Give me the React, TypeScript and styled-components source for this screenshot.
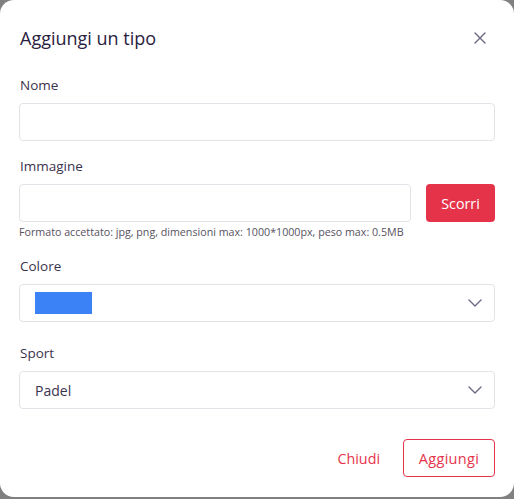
import React from "react";
import styled, { createGlobalStyle } from "styled-components";

const Global = createGlobalStyle`
  html, body { margin: 0; padding: 0; background: #808080; }
  body { font-family: "Open Sans", "Noto Sans", sans-serif; }
  * { box-sizing: border-box; }
`;

const Modal = styled.div`
  width: 514px;
  height: 497px;
  background: #ffffff;
  border-radius: 14px;
  padding: 24px 19px 20px 19px;
  display: flex;
  flex-direction: column;
`;

const Header = styled.div`
  display: flex;
  align-items: center;
  justify-content: space-between;
  height: 28px;
  margin-bottom: 23px;
  padding-left: 1px;
`;

const Title = styled.h2`
  margin: 0;
  font-size: 18px;
  font-weight: 400;
  color: #2a2140;
  line-height: 28px;
`;

const CloseButton = styled.button`
  border: none;
  background: none;
  padding: 0;
  width: 16px;
  height: 16px;
  margin-right: 7px;
  display: flex;
  align-items: center;
  justify-content: center;
  color: #6c6884;
  cursor: pointer;
`;

const Field = styled.div<{ $mb: number }>`
  display: flex;
  flex-direction: column;
  margin-bottom: ${(p) => p.$mb}px;
`;

const Label = styled.label`
  font-size: 13.5px;
  line-height: 20px;
  color: #3b334d;
  margin-bottom: 8px;
  padding-left: 1px;
`;

const boxCss = `
  height: 38px;
  border: 1px solid #e3e2e8;
  border-radius: 4px;
  background: #fff;
`;

const Input = styled.input`
  ${boxCss}
  width: 100%;
  padding: 0 15px;
  font-family: inherit;
  font-size: 14px;
  outline: none;
`;

const Row = styled.div`
  display: flex;
  gap: 15px;
`;

const FileInput = styled.input`
  ${boxCss}
  flex: 1;
  padding: 0 15px;
  outline: none;
`;

const PrimaryButton = styled.button`
  width: 69px;
  height: 38px;
  background: #e5344a;
  color: #fff;
  border: none;
  border-radius: 4px;
  font-family: inherit;
  font-size: 14.3px;
  cursor: pointer;
`;

const Help = styled.div`
  margin-top: 3px;
  font-size: 10.7px;
  line-height: 14px;
  color: #56525e;
`;

const Select = styled.div`
  ${boxCss}
  display: flex;
  align-items: center;
  justify-content: space-between;
  padding: 0 12px 0 15px;
  font-size: 14px;
  color: #3b334d;
`;

const Swatch = styled.div<{ $color: string }>`
  width: 57px;
  height: 22px;
  background: ${(p) => p.$color};
`;

const Footer = styled.div`
  margin-top: auto;
  display: flex;
  justify-content: flex-end;
  align-items: center;
  gap: 23px;
`;

const TextButton = styled.button`
  border: none;
  background: none;
  color: #e5344a;
  font-family: inherit;
  font-size: 14.3px;
  padding: 0;
  cursor: pointer;
`;

const OutlineButton = styled.button`
  height: 38px;
  width: 92px;
  border: 1px solid #e5344a;
  border-radius: 4px;
  background: #fff;
  color: #e5344a;
  font-family: inherit;
  font-size: 14.5px;
  letter-spacing: 0.3px;
  cursor: pointer;
`;

const Chevron = () => (
  <svg width="14" height="8" viewBox="0 0 14 8" fill="none">
    <path d="M1 1l6 6 6-6" stroke="#6c6884" strokeWidth="1.4" strokeLinecap="round" strokeLinejoin="round" />
  </svg>
);

export default function App() {
  return (
    <>
      <Global />
      <Modal>
        <Header>
          <Title>Aggiungi un tipo</Title>
          <CloseButton aria-label="close">
            <svg width="12" height="12" viewBox="0 0 12 12">
              <path d="M1 1l10 10M11 1L1 11" stroke="#6c6884" strokeWidth="1.4" strokeLinecap="round" />
            </svg>
          </CloseButton>
        </Header>
        <Field $mb={15}>
          <Label>Nome</Label>
          <Input />
        </Field>
        <Field $mb={17}>
          <Label>Immagine</Label>
          <Row>
            <FileInput />
            <PrimaryButton>Scorri</PrimaryButton>
          </Row>
          <Help>Formato accettato: jpg, png, dimensioni max: 1000*1000px, peso max: 0.5MB</Help>
        </Field>
        <Field $mb={21}>
          <Label>Colore</Label>
          <Select>
            <Swatch $color="#3b82f6" />
            <Chevron />
          </Select>
        </Field>
        <Field $mb={0}>
          <Label>Sport</Label>
          <Select>
            <span>Padel</span>
            <Chevron />
          </Select>
        </Field>
        <Footer>
          <TextButton>Chiudi</TextButton>
          <OutlineButton>Aggiungi</OutlineButton>
        </Footer>
      </Modal>
    </>
  );
}
